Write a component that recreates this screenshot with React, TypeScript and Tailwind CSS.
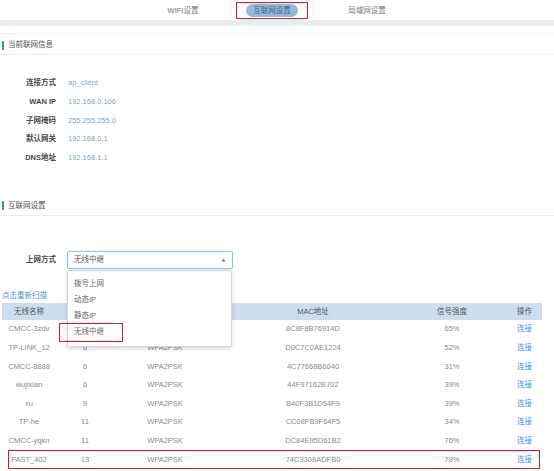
const wifiList = [
	{ name: "CMCC-3zdv", ch: "6", mac: "8C8F8B76914D", signal: "65%" },
	{ name: "TP-LINK_12", ch: "6", mac: "D0C7C0AE1224", signal: "52%" },
	{ name: "CMCC-8888", ch: "6", mac: "4C77668B6040", signal: "31%" },
	{ name: "wujixian", ch: "6", mac: "44F97162B702", signal: "39%" },
	{ name: "xu", ch: "9", mac: "B40F3B1D54F9", signal: "39%" },
	{ name: "TP-he", ch: "11", mac: "CC08FB9F64F5", signal: "34%" },
	{ name: "CMCC-yqkn", ch: "11", mac: "DC84E95D61B2", signal: "76%" },
	{ name: "FAST_402", ch: "13", mac: "74C3308ADFB0", signal: "78%" },
];

const netInfo = [
	{ label: "连接方式", value: "ap_client" },
	{ label: "WAN IP", value: "192.168.0.106" },
	{ label: "子网掩码", value: "255.255.255.0" },
	{ label: "默认网关", value: "192.168.0.1" },
	{ label: "DNS地址", value: "192.168.1.1" },
];

function SectionTitle({ title }: { title: string }) {
	return (
		<div className="flex h-[21px] items-center border-[#ececec] border-b pt-[2px]">
			<div className="ml-[2px] h-[9px] w-[2px] bg-[#2f8be6]" />
			<span className="ml-[4px] text-[#555]">{title}</span>
		</div>
	);
}

export default function App() {
	return (
		<div
			className="relative h-[471px] w-[554px] overflow-hidden bg-white text-[7.5px] leading-none"
			style={{ fontFamily: '"Liberation Sans", "Noto Sans CJK SC", sans-serif' }}
		>
			{/* Tabs */}
			<div className="flex h-[20px] items-start pt-[2px] pl-[153px] text-[#777]">
				<div className="flex h-[17px] w-[60px] items-center justify-center">
					WIFI设置
				</div>
				<div className="ml-[23px] flex h-[17px] w-[72px] items-center justify-center border-[1.5px] border-[#e3161b]">
					<div className="flex h-[13px] w-[52px] items-center justify-center rounded-full bg-[#94b9de] text-[#42628a]">
						互联网设置
					</div>
				</div>
				<div className="ml-[29px] flex h-[17px] w-[60px] items-center justify-center">
					局域网设置
				</div>
			</div>
			<div className="h-[6px] bg-[#e9edf2]" />
			<div className="mt-[7px] border-[#f0f0f0] border-t">
				<SectionTitle title="当前联网信息" />

				{/* Current info */}
				<div className="mt-[18.6px] flex flex-col">
					{netInfo.map((row) => (
						<div key={row.label} className="flex h-[18.75px] items-center">
							<span className="w-[56px] text-right font-semibold text-[#4a4a4a]">
								{row.label}
							</span>
							<span className="ml-[12px] text-[#86a2c8]">{row.value}</span>
						</div>
					))}
				</div>

				<div className="mt-[27.6px]">
					<SectionTitle title="互联网设置" />
				</div>

				{/* Select */}
				<div className="mt-[35px] flex h-[18px] items-center">
					<span className="w-[56px] text-right font-semibold text-[#4a4a4a]">
						上网方式
					</span>
					<div className="relative ml-[11px] h-[18px] w-[166px]">
						<div className="flex h-full items-center justify-between rounded-[2px] border border-[#8fc3ee] pr-[6px] pl-[6px] text-[#555] shadow-[0_0_2px_#bfe0f8]">
							<span>无线中继</span>
							<svg width="5" height="4" viewBox="0 0 5 4" aria-hidden="true">
								<path d="M2.5 0.5L4.5 3.5H0.5Z" fill="#777" />
							</svg>
						</div>
						<div className="absolute top-[19px] left-0 z-10 flex w-[165px] flex-col rounded-[2px] border border-[#d6d6d6] bg-white pt-[5px] pb-[6px] text-[#666] shadow-[0_2px_4px_rgba(0,0,0,0.15)]">
							{["拨号上网", "动态IP", "静态IP", "无线中继"].map((o) => (
								<div key={o} className="flex h-[16px] items-center pl-[6px]">
									{o}
								</div>
							))}
						</div>
					</div>
				</div>

				<div className="mt-[21px] flex h-[12px] items-center pl-[2px] text-[#4a90d9]">
					点击重新扫描
				</div>

				{/* Table */}
				<div className="mt-[1px] w-[542px] pl-[2px]">
					<div className="flex h-[17px] items-center bg-[#cadef0] text-[#555]">
						<span className="w-[54px] text-center">无线名称</span>
						<span className="w-[58px] text-center">信道</span>
						<span className="w-[102px] text-center">加密方式</span>
						<span className="w-[194px] text-center">MAC地址</span>
						<span className="w-[84px] text-center">信号强度</span>
						<span className="flex-1 pr-[10px] text-right">操作</span>
					</div>
					{wifiList.map((w) => (
						<div key={w.mac} className="flex h-[18.6px] items-center text-[#8a8a8a]">
							<span className="w-[54px] text-center">{w.name}</span>
							<span className="w-[58px] text-center">{w.ch}</span>
							<span className="w-[102px] text-center">WPA2PSK</span>
							<span className="w-[194px] text-center">{w.mac}</span>
							<span className="w-[84px] text-center">{w.signal}</span>
							<span className="flex-1 pr-[10px] text-right text-[#3d8fe3]">连接</span>
						</div>
					))}
				</div>
			</div>

			{/* annotation boxes */}
			<div className="absolute top-[323px] left-[59px] z-20 h-[19px] w-[64px] border-[1.5px] border-[#e3161b]" />
			<div className="absolute top-[450px] left-[8px] h-[19px] w-[532px] border-[1.5px] border-[#e3161b]" />
		</div>
	);
}
